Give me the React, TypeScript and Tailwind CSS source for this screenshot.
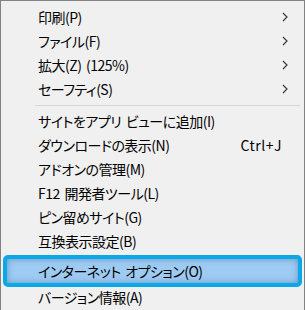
import React from 'react';

type Item = { label: string; sub?: boolean; shortcut?: string };

const groupA: Item[] = [
  { label: '印刷(P)', sub: true },
  { label: 'ファイル(F)', sub: true },
  { label: '拡大(Z) (125%)', sub: true },
  { label: 'セーフティ(S)', sub: true },
];

const groupB: Item[] = [
  { label: 'サイトをアプリ ビューに追加(I)' },
  { label: 'ダウンロードの表示(N)', shortcut: 'Ctrl+J' },
  { label: 'アドオンの管理(M)' },
  { label: 'F12 開発者ツール(L)' },
  { label: 'ピン留めサイト(G)' },
  { label: '互換表示設定(B)' },
];

function Chevron() {
  return (
    <svg width="6" height="10" viewBox="0 0 6 10" className="text-[#333]">
      <path d="M1 1 L5 5 L1 9" fill="none" stroke="currentColor" strokeWidth="1.1" />
    </svg>
  );
}

function Row({ item, tall }: { item: Item; tall?: boolean }) {
  return (
    <div className={`flex items-center pl-[37px] pr-[16px] ${tall ? 'h-[28px]' : 'h-[24px]'}`}>
      <span className="flex-1 whitespace-nowrap tracking-[-0.5px] [word-spacing:2px]">{item.label}</span>
      {item.shortcut && <span className="mr-[6px] tracking-[0.5px]">{item.shortcut}</span>}
      {item.sub && <Chevron />}
    </div>
  );
}

function Separator({ h }: { h: string }) {
  return (
    <div className={`flex items-center pl-[34px] pr-[4px] ${h}`}>
      <div className="h-px w-full bg-[#d5d5d5]" />
    </div>
  );
}

export default function App() {
  return (
    <div
      className="relative w-[305px] h-[310px] overflow-hidden bg-[#f0f0f0] border-l border-t border-r border-[#828282] pt-[4px] text-[14px] text-black [font-feature-settings:'palt']"
      style={{ fontFamily: '"Noto Sans CJK JP", "Noto Sans", sans-serif' }}
    >
      {groupA.map((it) => <Row key={it.label} item={it} />)}
      <Separator h="h-[8px]" />
      {groupB.map((it) => <Row key={it.label} item={it} />)}
      <Separator h="h-[4px]" />
      <div className="relative">
        <div className="absolute left-[2px] right-[2px] top-[-2px] bottom-[-2px] rounded-[5px] border-[4px] border-[#0aa8e6] bg-[#9ecbf2] shadow-[inset_0_0_6px_rgba(30,80,140,0.45)]" />
        <div className="relative">
          <Row item={{ label: 'インターネット オプション(O)' }} tall />
        </div>
      </div>
      <Row item={{ label: 'バージョン情報(A)' }} />
    </div>
  );
}
